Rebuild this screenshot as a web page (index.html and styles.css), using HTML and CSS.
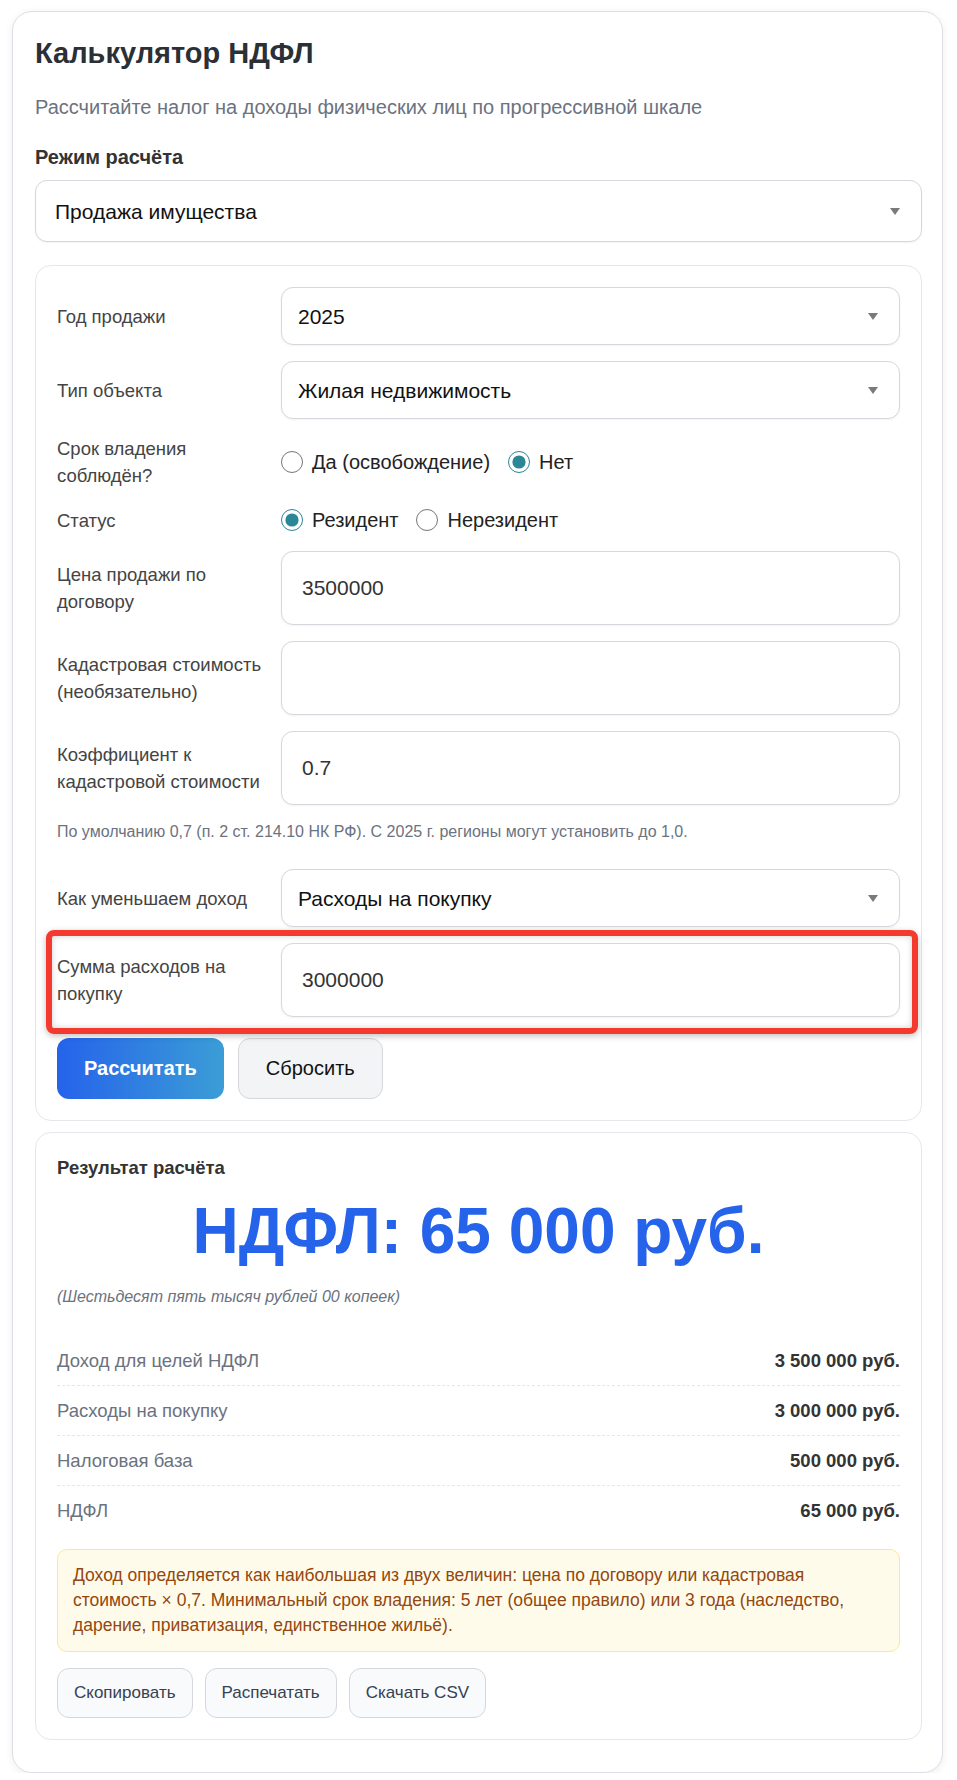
FILE: index.html
```html
<!doctype html>
<html lang="ru">
  <head>
    <meta charset="UTF-8" />
    <meta name="viewport" content="width=device-width, initial-scale=1.0" />
    <title>Калькулятор НДФЛ</title>
    <link rel="stylesheet" href="styles.css">
  </head>
  <body>
    <div class="calc">
      <h1>Калькулятор НДФЛ</h1>
      <p class="lead">Рассчитайте налог на доходы физических лиц по прогрессивной шкале</p>

      <label class="mode-label" for="mode">Режим расчёта</label>
      <div class="select select-lg">
        <select id="mode">
          <option>Продажа имущества</option>
        </select>
      </div>

      <div class="panel form">
        <div class="row">
          <label class="row-label" for="year">Год продажи</label>
          <div class="select">
            <select id="year"><option>2025</option></select>
          </div>
        </div>

        <div class="row">
          <label class="row-label" for="type">Тип объекта</label>
          <div class="select">
            <select id="type"><option>Жилая недвижимость</option></select>
          </div>
        </div>

        <div class="row">
          <span class="row-label">Срок владения соблюдён?</span>
          <div class="radios">
            <label><input type="radio" name="term" /> Да (освобождение)</label>
            <label><input type="radio" name="term" checked /> Нет</label>
          </div>
        </div>

        <div class="row">
          <span class="row-label">Статус</span>
          <div class="radios">
            <label><input type="radio" name="status" checked /> Резидент</label>
            <label><input type="radio" name="status" /> Нерезидент</label>
          </div>
        </div>

        <div class="row">
          <label class="row-label" for="price">Цена продажи по договору</label>
          <input class="field" id="price" type="text" value="3500000" />
        </div>

        <div class="row">
          <label class="row-label" for="cadastre">Кадастровая стоимость (необязательно)</label>
          <input class="field" id="cadastre" type="text" value="" />
        </div>

        <div class="row">
          <label class="row-label" for="coef">Коэффициент к кадастровой стоимости</label>
          <input class="field" id="coef" type="text" value="0.7" />
        </div>

        <p class="hint">По умолчанию 0,7 (п. 2 ст. 214.10 НК РФ). С 2025 г. регионы могут установить до 1,0.</p>

        <div class="row">
          <label class="row-label" for="reduce">Как уменьшаем доход</label>
          <div class="select">
            <select id="reduce"><option>Расходы на покупку</option></select>
          </div>
        </div>

        <div class="row highlight">
          <label class="row-label" for="expenses">Сумма расходов на покупку</label>
          <input class="field" id="expenses" type="text" value="3000000" />
        </div>

        <div class="actions">
          <button class="btn btn-primary">Рассчитать</button>
          <button class="btn">Сбросить</button>
        </div>
      </div>

      <div class="panel result">
        <h2>Результат расчёта</h2>
        <div class="total">НДФЛ: 65 000 руб.</div>
        <p class="in-words">(Шестьдесят пять тысяч рублей 00 копеек)</p>

        <div class="lines">
          <div class="line"><span>Доход для целей НДФЛ</span><b>3 500 000 руб.</b></div>
          <div class="line"><span>Расходы на покупку</span><b>3 000 000 руб.</b></div>
          <div class="line"><span>Налоговая база</span><b>500 000 руб.</b></div>
          <div class="line"><span>НДФЛ</span><b>65 000 руб.</b></div>
        </div>

        <div class="note">
          Доход определяется как наибольшая из двух величин: цена по договору или кадастровая
          стоимость × 0,7. Минимальный срок владения: 5 лет (общее правило) или 3 года (наследство,
          дарение, приватизация, единственное жильё).
        </div>

        <div class="tools">
          <button class="tool">Скопировать</button>
          <button class="tool">Распечатать</button>
          <button class="tool">Скачать CSV</button>
        </div>
      </div>
    </div>
  </body>
</html>
```

FILE: styles.css
```css
body {
  margin: 0;
  padding: 11px 14px 0 12px;
  font-family: "Liberation Sans", Arial, sans-serif;
  background: #fff;
  color: #333;
}
.calc {
  background: #fff;
  border: 1px solid #dcdfe3;
  border-radius: 20px;
  padding: 24px 20px 32px 22px;
  box-shadow: 0 2px 8px rgba(0, 0, 0, 0.07);
}
h1 {
  margin: 0;
  font-size: 29px;
  line-height: 34px;
  font-weight: bold;
  color: #2b2f36;
}
.lead {
  margin: 24px 0 0;
  font-size: 20px;
  line-height: 27px;
  color: #6b7280;
}
.mode-label {
  display: block;
  margin-top: 23px;
  font-size: 20px;
  line-height: 26px;
  font-weight: bold;
  color: #333;
}
.select {
  position: relative;
}
.select::after {
  content: "";
  position: absolute;
  right: 22px;
  top: 50%;
  margin-top: -3px;
  border-left: 5.5px solid transparent;
  border-right: 5.5px solid transparent;
  border-top: 7px solid #7a7a7a;
  pointer-events: none;
}
.select select {
  appearance: none;
  -webkit-appearance: none;
  width: 100%;
  height: 58px;
  padding: 0 44px 0 16px;
  border: 1px solid #d4d7dc;
  border-radius: 12px;
  background: #fff;
  font-family: inherit;
  font-size: 21px;
  color: #111;
  box-shadow: 0 1px 2px rgba(0, 0, 0, 0.05);
}
.select-lg {
  margin-top: 10px;
}
.select-lg select {
  height: 62px;
  padding-left: 19px;
}
.panel {
  border: 1px solid #e5e7eb;
  border-radius: 16px;
  padding: 21px;
  background: #fff;
}
.form {
  margin-top: 23px;
  display: flex;
  flex-direction: column;
  gap: 16px;
}
.row {
  display: grid;
  grid-template-columns: 212px 1fr;
  column-gap: 12px;
  align-items: center;
}
.row-label {
  font-size: 18.5px;
  line-height: 27px;
  color: #444;
}
.radios {
  display: flex;
  align-items: center;
  font-size: 20px;
  line-height: 30px;
  color: #222;
}
.radios label {
  display: flex;
  align-items: center;
  margin-right: 18px;
}
.radios input {
  width: 22px;
  height: 22px;
  margin: 0 9px 0 0;
  accent-color: #2a8795;
}
.field {
  box-sizing: border-box;
  width: 100%;
  height: 74px;
  padding: 0 20px;
  border: 1px solid #d4d7dc;
  border-radius: 12px;
  font-family: inherit;
  font-size: 21px;
  color: #333;
  box-shadow: 0 1px 2px rgba(0, 0, 0, 0.05);
}
.hint {
  margin: 0 0 11px;
  font-size: 16px;
  line-height: 21px;
  color: #6b7280;
}
.highlight {
  position: relative;
}
.highlight::after {
  content: "";
  position: absolute;
  top: -13px;
  left: -11px;
  right: -18px;
  bottom: -17px;
  border: 6px solid #f43a2f;
  border-radius: 8px;
  box-shadow: 0 2px 6px rgba(0, 0, 0, 0.25), inset 0 0 6px rgba(0, 0, 0, 0.18);
  pointer-events: none;
}
.actions {
  display: flex;
  gap: 14px;
  margin-top: 5px;
}
.btn {
  height: 61px;
  padding: 0 27px;
  border: 1px solid #d4d7dc;
  border-radius: 12px;
  background: #f3f4f6;
  font-family: inherit;
  font-size: 20px;
  color: #111;
  cursor: pointer;
}
.btn-primary {
  border: none;
  background: linear-gradient(90deg, #2563eb, #3b9dd6);
  color: #fff;
  font-weight: bold;
}
.result {
  margin-top: 11px;
}
.result h2 {
  margin: 0;
  font-size: 18.5px;
  line-height: 27px;
  font-weight: bold;
  color: #333;
}
.total {
  margin-top: 12px;
  text-align: center;
  font-size: 64px;
  line-height: 77px;
  font-weight: bold;
  color: #2563eb;
}
.in-words {
  margin: 16px 0 0;
  font-size: 16px;
  line-height: 21px;
  font-style: italic;
  color: #6b7280;
}
.lines {
  margin-top: 29px;
}
.line {
  display: flex;
  justify-content: space-between;
  padding: 12px 0;
  font-size: 18.5px;
  line-height: 25px;
  border-bottom: 1px dashed #e5e7eb;
}
.line:last-child {
  border-bottom: none;
}
.line span {
  color: #6b7280;
}
.line b {
  color: #333;
}
.note {
  margin-top: 14px;
  padding: 13px 15px;
  border: 1px solid #fbe4a6;
  border-radius: 10px;
  background: #fffbea;
  font-size: 17.5px;
  line-height: 25px;
  color: #94470f;
}
.tools {
  display: flex;
  gap: 12px;
  margin-top: 16px;
}
.tool {
  height: 50px;
  padding: 0 16px;
  border: 1px solid #d4d7dc;
  border-radius: 12px;
  background: #f8fafc;
  font-family: inherit;
  font-size: 17px;
  color: #374151;
  cursor: pointer;
}
```
